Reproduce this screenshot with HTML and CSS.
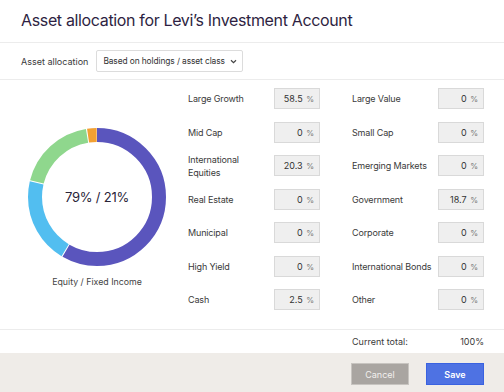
FILE: index.html
```html
<!DOCTYPE html>
<html lang="en">
<head>
  <meta charset="UTF-8">
  <meta name="viewport" content="width=device-width, initial-scale=1.0">
  <title>Asset allocation</title>
  <link rel="stylesheet" href="styles.css">
</head>

<body>
  <div class="modal">
    <h1 class="title">Asset allocation for Levi’s Investment Account</h1>

    <div class="toolbar">
      <span class="toolbar-label">Asset allocation</span>
      <div class="select">
        <span>Based on holdings / asset class</span>
        <svg class="chevron" width="7" height="5" viewBox="0 0 7 5">
          <path d="M1 1.2 L3.5 3.6 L6 1.2" fill="none" stroke="#444" stroke-width="1.2"/>
        </svg>
      </div>
    </div>

    <div class="content">
      <div class="chart">
        <svg class="donut" width="140" height="140" viewBox="0 0 140 140">
          <g transform="rotate(-90 70 70)" fill="none" stroke-width="14">
            <circle cx="70" cy="70" r="62" stroke="#5a55bd" stroke-dasharray="226.9 400" stroke-dashoffset="0"/>
            <circle cx="70" cy="70" r="62" stroke="#52bef0" stroke-dasharray="78.1 400" stroke-dashoffset="-227.9"/>
            <circle cx="70" cy="70" r="62" stroke="#8fd78d" stroke-dasharray="71.9 400" stroke-dashoffset="-307"/>
            <circle cx="70" cy="70" r="62" stroke="#f2a032" stroke-dasharray="8.7 400" stroke-dashoffset="-379.9"/>
          </g>
          <text x="70" y="75" text-anchor="middle" class="donut-value">79% / 21%</text>
        </svg>
        <div class="chart-caption">Equity / Fixed Income</div>
      </div>

      <div class="fields">
        <div class="field"><span class="field-label">Large Growth</span><div class="field-input">58.5 <small>%</small></div></div>
        <div class="field"><span class="field-label">Large Value</span><div class="field-input">0 <small>%</small></div></div>
        <div class="field"><span class="field-label">Mid Cap</span><div class="field-input">0 <small>%</small></div></div>
        <div class="field"><span class="field-label">Small Cap</span><div class="field-input">0 <small>%</small></div></div>
        <div class="field"><span class="field-label">International Equities</span><div class="field-input">20.3 <small>%</small></div></div>
        <div class="field"><span class="field-label">Emerging Markets</span><div class="field-input">0 <small>%</small></div></div>
        <div class="field"><span class="field-label">Real Estate</span><div class="field-input">0 <small>%</small></div></div>
        <div class="field"><span class="field-label">Government</span><div class="field-input">18.7 <small>%</small></div></div>
        <div class="field"><span class="field-label">Municipal</span><div class="field-input">0 <small>%</small></div></div>
        <div class="field"><span class="field-label">Corporate</span><div class="field-input">0 <small>%</small></div></div>
        <div class="field"><span class="field-label">High Yield</span><div class="field-input">0 <small>%</small></div></div>
        <div class="field"><span class="field-label">International Bonds</span><div class="field-input">0 <small>%</small></div></div>
        <div class="field"><span class="field-label">Cash</span><div class="field-input">2.5 <small>%</small></div></div>
        <div class="field"><span class="field-label">Other</span><div class="field-input">0 <small>%</small></div></div>
      </div>
    </div>

    <div class="total">
      <span>Current total:</span>
      <span>100%</span>
    </div>

    <div class="footer">
      <button class="btn btn-cancel">Cancel</button>
      <button class="btn btn-save">Save</button>
    </div>
  </div>
</body>
</html>
```

FILE: styles.css
```css
:root {
  --text: #3a3a3a;
  --title: #2e1f42;
  --border: #ececec;
  --input-bg: #efefef;
  --input-border: #d9d9d9;
  --footer-bg: #efece8;
}

* {
  margin: 0;
  padding: 0;
  box-sizing: border-box;
}

body {
  font-family: Inter, "Noto Sans", sans-serif;
  color: var(--text);
  background: #fff;
  width: 504px;
  height: 392px;
  overflow: hidden;
}

.modal {
  display: flex;
  flex-direction: column;
  height: 392px;
}

.title {
  height: 43px;
  padding: 10px 21px 0;
  font-size: 16px;
  letter-spacing: -0.35px;
  font-weight: 400;
  color: var(--title);
  border-bottom: 1px solid var(--border);
}

.toolbar {
  height: 37px;
  display: flex;
  align-items: center;
  gap: 8px;
  padding: 0 21px;
  border-bottom: 1px solid var(--border);
  font-size: 9px;
}

.select {
  display: flex;
  align-items: center;
  gap: 5px;
  height: 22px;
  padding: 0 5px 0 6px;
  border: 1px solid #dcdcdc;
  border-radius: 2px;
  color: #333;
  font-size: 8.4px;
  letter-spacing: -0.1px;
}

.content {
  display: flex;
  height: 250px;
  border-bottom: 1px solid var(--border);
}

.chart {
  width: 167px;
  padding: 47px 0 0 27px;
  display: flex;
  flex-direction: column;
  align-items: center;
}

.chart-caption {
  margin-top: 9px;
  font-size: 8.8px;
  color: #444;
}

.donut-value {
  font-size: 13px;
  letter-spacing: -0.2px;
  fill: #2a2438;
}

.fields {
  margin-left: 21px;
  padding-top: 8px;
  display: grid;
  grid-template-columns: 132px 132px;
  column-gap: 32px;
  row-gap: 12.5px;
  align-content: start;
}

.field {
  display: flex;
  align-items: center;
  height: 21px;
}

.field-label {
  width: 86px;
  flex-shrink: 0;
  font-size: 9px;
  line-height: 13px;
  letter-spacing: -0.15px;
  padding-right: 1px;
}

.field-input {
  width: 46px;
  height: 21px;
  background: var(--input-bg);
  border: 1px solid var(--input-border);
  font-size: 9px;
  text-align: right;
  line-height: 19px;
  padding-right: 5px;
  color: #333;
}

.field-input small {
  font-size: 8px;
  color: #777;
  margin-left: 1px;
}

.total {
  height: 23px;
  display: flex;
  align-items: center;
  justify-content: space-between;
  margin-left: 352px;
  padding-right: 20px;
  font-size: 9px;
}

.footer {
  flex: 1;
  background: var(--footer-bg);
  display: flex;
  justify-content: flex-end;
  align-items: flex-start;
  gap: 17px;
  padding: 10px 20px 0;
}

.btn {
  width: 58px;
  height: 22px;
  font-family: inherit;
  font-size: 9px;
  color: #fff;
  border: 1px solid transparent;
  cursor: pointer;
}

.btn-cancel {
  background: #a9a5a1;
  border-color: #c7c4c0;
  color: #f2f0ee;
}

.btn-save {
  background: #4e72e3;
  border-color: #3a62e0;
  font-weight: 600;
}
```
